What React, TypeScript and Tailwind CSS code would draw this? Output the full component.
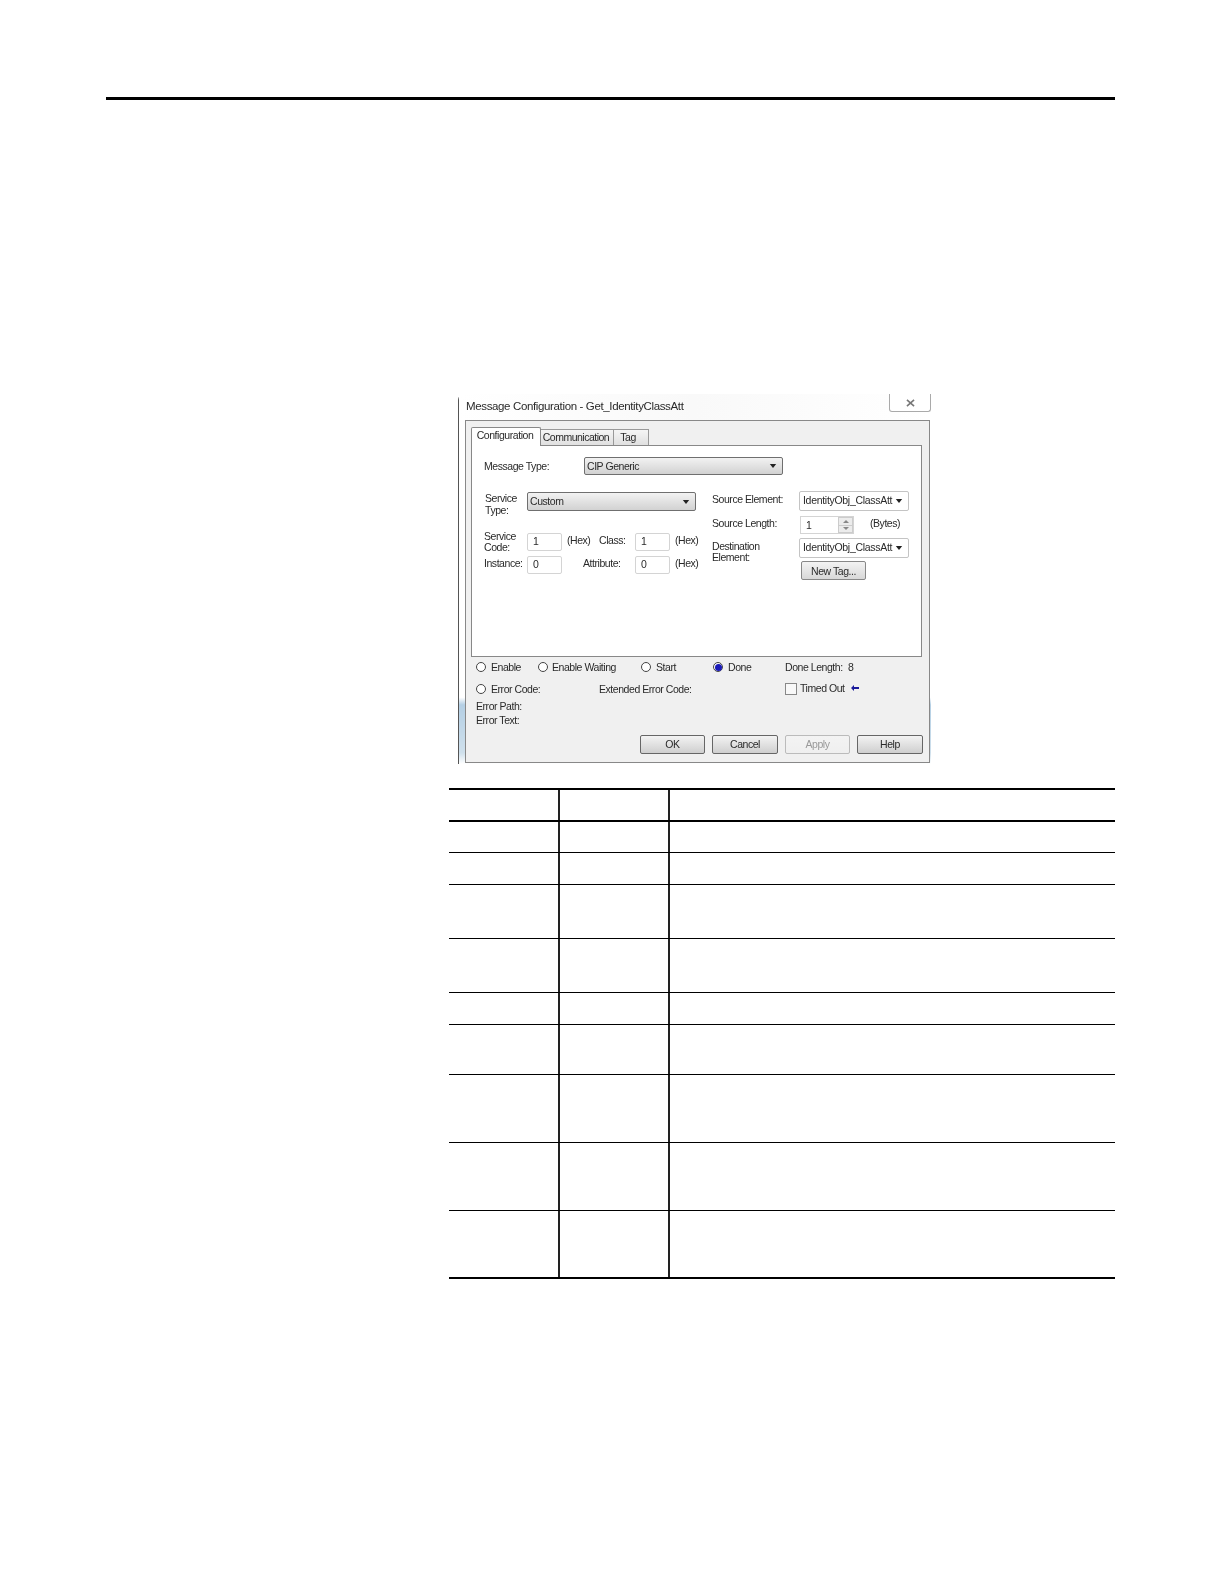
const Arrow = () => (
  <svg viewBox="0 0 8 5" className="h-[4px] w-[8px]"><path d="M0 0h8L4 5z" fill="#222" /></svg>
);

const Select = ({ value, className }: { value: string; className: string }) => (
  <div className={`flex items-center justify-between rounded-[2px] border border-[#6f6f6f] bg-gradient-to-b from-[#f2f2f2] to-[#d2d2d2] pl-[2px] pr-[5px] ${className}`}>
    <span>{value}</span>
    <Arrow />
  </div>
);

const Combo = ({ value }: { value: string }) => (
  <div className="flex h-[20px] w-[110px] items-center justify-between rounded-[2px] border border-[#c4c4c4] bg-white pl-[3px] pr-[5px] tracking-[-0.3px]">
    <span className="mb-[2px]">{value}</span>
    <Arrow />
  </div>
);

const Field = ({ value }: { value: string }) => (
  <div className="flex h-[18px] w-[35px] items-center rounded-[2px] border border-[#d4d4d4] bg-white pl-[5px]">
    <span className="mb-[1px]">{value}</span>
  </div>
);

const Radio = ({ label, className, on = false }: { label: string; className: string; on?: boolean }) => (
  <div className={`flex items-center gap-[5px] ${className}`}>
    <span className="flex h-[10px] w-[10px] items-center justify-center rounded-full border border-[#444] bg-white">
      {on && <span className="h-[7px] w-[7px] rounded-full bg-[#1a1ab8]" />}
    </span>
    <span>{label}</span>
  </div>
);

const Btn = ({ label, className, disabled = false }: { label: string; className: string; disabled?: boolean }) => (
  <div className={`flex h-[19px] items-center justify-center rounded-[2px] border bg-gradient-to-b ${className} ${disabled ? "border-[#bbb] from-[#f3f3f3] to-[#efefef] text-[#999]" : "border-[#666] from-[#f3f3f3] to-[#cfcfcf]"}`}>
    {label}
  </div>
);

const rows = [
  "h-[32px] border-b-2",
  "h-[31px] border-b",
  "h-[32px] border-b",
  "h-[54px] border-b",
  "h-[54px] border-b",
  "h-[32px] border-b",
  "h-[50px] border-b",
  "h-[68px] border-b",
  "h-[68px] border-b",
  "h-[68px] border-b-2",
];

export default function App() {
  return (
    <div className="h-[1584px] w-[1224px] bg-white pl-[106px] pt-[97px] [font-family:'Liberation_Sans',sans-serif] text-[10.5px] leading-[11px] tracking-[-0.45px] text-[#2a2a2a]">
      <div className="h-[3px] w-[1009px] bg-black" />

      <div className="ml-[352px] mt-[294px] flex h-[370px] w-[473px] flex-col rounded-tl-[6px] border-l border-[#555] bg-[linear-gradient(to_bottom,white_0%,white_82%,#b4cfe4_84%,#cfe0ec_97%,white_100%)] blur-[0.3px]">
        <div className="flex h-[26px] items-start justify-between bg-gradient-to-r from-white via-[#f9f9f9] to-white pl-[7px]">
          <span className="mt-[6px] text-[11.5px] leading-[13px] tracking-[-0.36px]">Message Configuration - Get_IdentityClassAtt</span>
          <div className="flex h-[18px] w-[42px] items-center justify-center rounded-b-[3px] border border-t-0 border-[#aaa] bg-white">
            <svg viewBox="0 0 10 9" className="h-[8px] w-[9px]"><path d="M1 1l8 7M9 1L1 8" stroke="#777" strokeWidth="1.8" fill="none" /></svg>
          </div>
        </div>

        <div className="ml-[6px] flex h-[343px] w-[465px] flex-col border border-[#888] bg-[#f0f0f0] pl-[5px]">
          <div className="mt-[5px] flex h-[19px] items-end">
            <div className="relative top-px z-10 flex h-[19px] w-[70px] items-start justify-center rounded-t-[2px] border border-b-0 border-[#888] bg-white pt-[2px] pr-[2px]">Configuration</div>
            <div className="flex h-[16px] w-[73px] items-center justify-center border-r border-t border-[#999] bg-gradient-to-b from-[#f5f5f5] to-[#e0e0e0] pr-[2px] tracking-[-0.5px]">Communication</div>
            <div className="flex h-[16px] w-[35px] items-center justify-center border-r border-t border-[#999] bg-gradient-to-b from-[#f5f5f5] to-[#e0e0e0] pr-[6px]">Tag</div>
          </div>

          <div className="h-[212px] w-[451px] border border-[#888] bg-white pl-[12px]">
            <div className="mt-[11px] flex h-[18px] items-center">
              <span className="w-[100px]">Message Type:</span>
              <Select value="CIP Generic" className="h-[18px] w-[199px]" />
            </div>

            <div className="mt-[17px] flex">
              <div className="flex w-[228px] flex-col">
                <div className="flex h-[41px] items-start">
                  <span className="ml-[1px] mt-[1px] w-[42px] leading-[11.5px]">Service<br />Type:</span>
                  <Select value="Custom" className="h-[19px] w-[169px]" />
                </div>
                <div className="flex h-[18px] items-center">
                  <span className="w-[43px] leading-[11.5px]">Service<br />Code:</span>
                  <Field value="1" />
                  <span className="mb-[3px] ml-[5px] w-[32px]">(Hex)</span>
                  <span className="mb-[3px] w-[36px]">Class:</span>
                  <Field value="1" />
                  <span className="mb-[3px] ml-[5px]">(Hex)</span>
                </div>
                <div className="mt-[5px] flex h-[18px] items-center">
                  <span className="mb-[3px] w-[43px]">Instance:</span>
                  <Field value="0" />
                  <span className="mb-[3px] ml-[21px] w-[52px]">Attribute:</span>
                  <Field value="0" />
                  <span className="mb-[3px] ml-[5px]">(Hex)</span>
                </div>
              </div>

              <div className="-mt-[1px] flex w-[198px] flex-col">
                <div className="flex h-[20px] items-center">
                  <span className="mb-[3px] w-[87px]">Source Element:</span>
                  <Combo value="IdentityObj_ClassAtt" />
                </div>
                <div className="mt-[5px] flex h-[18px] items-center">
                  <span className="mb-[3px] w-[88px]">Source Length:</span>
                  <div className="flex h-[18px] w-[54px] items-center justify-between border border-[#d4d4d4] bg-white pl-[5px]">
                    <span>1</span>
                    <div className="flex h-full w-[15px] flex-col gap-px bg-[#ccc] p-px">
                      <span className="flex flex-1 items-center justify-center bg-[#ececec]">
                        <svg viewBox="0 0 6 3" className="h-[3px] w-[6px]"><path d="M0 3h6L3 0z" fill="#888" /></svg>
                      </span>
                      <span className="flex flex-1 items-center justify-center bg-[#ececec]">
                        <svg viewBox="0 0 6 3" className="h-[3px] w-[6px]"><path d="M0 0h6L3 3z" fill="#888" /></svg>
                      </span>
                    </div>
                  </div>
                  <span className="mb-[3px] ml-[16px]">(Bytes)</span>
                </div>
                <div className="mt-[4px] flex h-[20px] items-start">
                  <span className="mt-[3px] w-[87px]">Destination<br />Element:</span>
                  <Combo value="IdentityObj_ClassAtt" />
                </div>
                <div className="ml-[89px] mt-[3px] flex h-[19px] w-[65px] items-center justify-center rounded-[2px] border border-[#888] bg-gradient-to-b from-[#f3f3f3] to-[#d8d8d8] pt-[1px]">New Tag...</div>
              </div>
            </div>
          </div>

          <div className="mt-[4px] flex h-[12px] items-center pl-[5px]">
            <Radio label="Enable" className="w-[62px]" />
            <Radio label="Enable Waiting" className="w-[103px] !gap-[4px]" />
            <Radio label="Start" className="w-[72px]" />
            <Radio label="Done" className="w-[72px]" on />
            <span className="w-[63px]">Done Length:</span>
            <span>8</span>
          </div>

          <div className="mt-[10px] flex h-[12px] items-center pl-[5px]">
            <Radio label="Error Code:" className="w-[123px]" />
            <span className="w-[186px]">Extended Error Code:</span>
            <span className="-mt-[1px] h-[12px] w-[12px] border border-[#888] bg-[#f8f8f8]" />
            <span className="-mt-[2px] ml-[3px]">Timed Out</span>
            <svg viewBox="0 0 8 6" className="-mt-[3px] ml-[6px] h-[6px] w-[8px]"><path d="M0 3l3-3v2h5v2H3v2z" fill="#1a1a9a" /></svg>
          </div>

          <div className="mt-[5px] flex flex-col gap-[2px] pl-[5px] leading-[12px]">
            <span>Error Path:</span>
            <span>Error Text:</span>
          </div>

          <div className="mt-[9px] flex gap-[7px] pl-[169px]">
            <Btn label="OK" className="w-[65px]" />
            <Btn label="Cancel" className="w-[66px]" />
            <Btn label="Apply" className="w-[65px]" disabled />
            <Btn label="Help" className="w-[66px]" />
          </div>
        </div>
      </div>

      <div className="ml-[343px] mt-[24px] w-[666px] border-t-2 border-black">
        {rows.map((cls, i) => (
          <div key={i} className={`grid grid-cols-[111px_110px_1fr] border-black ${cls}`}>
            <div className="border-r-2 border-[#222]" />
            <div className="border-r-2 border-[#222]" />
            <div />
          </div>
        ))}
      </div>
    </div>
  );
}
